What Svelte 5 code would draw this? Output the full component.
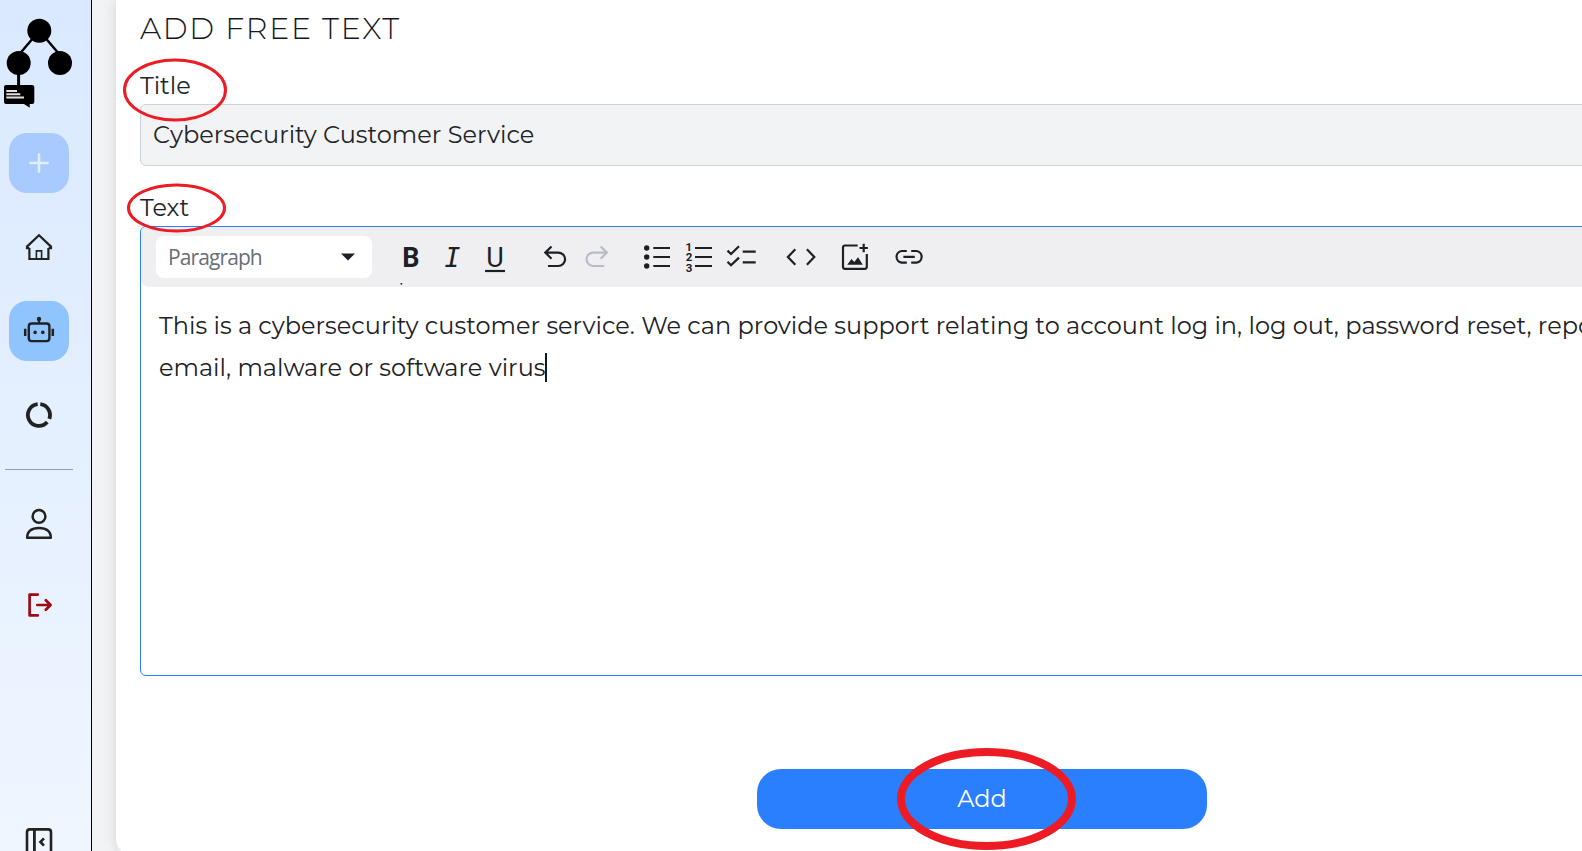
<script>
  let title = $state('Cybersecurity Customer Service');
</script>

<div class="app">
  <nav class="sidebar">
    <svg class="logo" width="78" height="133" viewBox="0 0 78 133">
      <path d="M39.3 30.7 L18.7 55 M39.3 30.7 L60 55" stroke="#000" stroke-width="2.5" />
      <path d="M18.6 63V88" stroke="#000" stroke-width="3" />
      <circle cx="39.3" cy="30.7" r="12" /><circle cx="18.7" cy="63" r="12" /><circle cx="60" cy="63" r="12" />
      <path d="M6 85H32.2Q34.3 85 34.3 87V102Q34.3 104 32.3 104H29.7V107.8L24 104H6Q4 104 4 102V87Q4 85 6 85Z" />
      <path d="M6.3 91H17M6.3 94.3H20.3M6.3 97.5H24" stroke="#e0e0e0" stroke-width="2" />
    </svg>
    <button class="item add" aria-label="New">
      <svg viewBox="0 0 60 60"><path d="M30 21.3V38.7M21.3 30H38.7" stroke="#e3efff" stroke-width="2.5" stroke-linecap="round" /></svg>
    </button>
    <button class="item" aria-label="Home">
      <svg viewBox="0 0 60 60" class="line">
        <path d="M20.4 31.2H18V29.6L30 18.3L42 29.6V31.2H39.6" />
        <path d="M20.4 31V42H39.4V31" />
        <path d="M27.4 42V33.9H32.6V42" stroke-width="1.6" />
      </svg>
    </button>
    <button class="item active" aria-label="Bots">
      <svg viewBox="0 0 60 60" class="line">
        <rect x="19.8" y="22.5" width="20.6" height="17.6" rx="2.8" stroke-width="2.4" />
        <path d="M30 22V18" /><circle cx="30" cy="18" r="1.1" fill="#222" />
        <circle cx="26.1" cy="31.4" r="1.8" class="dot" /><circle cx="33.8" cy="31.4" r="1.8" class="dot" />
        <path d="M16.2 27.7V35M43.8 27.7V35" stroke-width="2.5" />
      </svg>
    </button>
    <button class="item" aria-label="Usage">
      <svg viewBox="0 0 60 60" class="line">
        <path stroke-width="3.8" d="M31.3 19.2A10.9 10.9 0 0 1 40.3 33.8M38.2 37A10.9 10.9 0 1 1 28.7 19.2" />
      </svg>
    </button>
    <div class="divider"></div>
    <button class="item" aria-label="Profile">
      <svg viewBox="0 0 60 60" class="line">
        <circle cx="30" cy="22.4" r="6.4" stroke-width="2.5" />
        <path stroke-width="2.5" stroke-linejoin="round" d="M18.2 43.8C18 37.4 22.4 33.9 30 33.9S42 37.4 41.8 43.8Z" />
      </svg>
    </button>
    <button class="item logout" aria-label="Log out">
      <svg viewBox="0 0 60 60">
        <path d="M28.8 19.6H20.6V40.4H28.8M28.3 30H41.5M36.8 25.2L41.6 30L36.8 34.8" fill="none" stroke="#a00813" stroke-width="2.7" stroke-linecap="round" stroke-linejoin="round" />
      </svg>
    </button>
    <button class="item collapse" aria-label="Collapse">
      <svg viewBox="0 0 60 60" class="line">
        <rect x="18" y="17.4" width="24" height="26" rx="2.8" stroke-width="2.6" />
        <path d="M25.4 17V43" stroke-width="2.8" />
        <path d="M35 26.3L31.4 30L35 33.7" stroke-width="2.6" />
      </svg>
    </button>
  </nav>

  <main>
    <section class="card">
      <h1>ADD FREE TEXT</h1>
      <label class="caption" for="title"><span>Title</span>
        <svg class="ring" style:left="-18px" style:top="-19.5px" width="106" height="66"><ellipse cx="53" cy="33" rx="50.5" ry="30" stroke-width="3" /></svg>
      </label>
      <input id="title" bind:value={title} />
      <div class="caption second"><span>Text</span>
        <svg class="ring" style:left="-14px" style:top="-6px" width="102" height="52"><ellipse cx="50.5" cy="26" rx="48" ry="23" stroke-width="3" /></svg>
      </div>
      <div class="editor">
        <div class="toolbar">
          <div class="select"><span>Paragraph</span><svg width="14" height="8" viewBox="0 0 14 8"><path d="M0 .5H14L7 7.6Z" fill="#1c2026" /></svg></div>
          <div class="group">
            <svg viewBox="0 0 42 42"><text x="20.8" y="30.7" text-anchor="middle" font-family="Roboto" font-weight="700" font-size="27">B</text><rect class="dot" x="10.6" y="47" width="1.6" height="1.6" /></svg>
            <svg viewBox="0 0 42 42"><text x="20.6" y="30.5" text-anchor="middle" font-family="DejaVu Sans Mono" font-style="italic" font-size="26.5">I</text></svg>
            <svg viewBox="0 0 42 42"><text x="21" y="30.5" text-anchor="middle" font-family="Roboto" font-weight="400" font-size="27">U</text><path d="M11 35H31" /></svg>
          </div>
          <div class="group">
            <svg viewBox="0 0 42 42"><path d="M17.5 10.5L11.3 16.6L17.5 22.7M11.5 16.6H24.2A6.9 6.7 0 0 1 24.2 30H14" /></svg>
            <svg viewBox="0 0 42 42" class="off"><path d="M24.7 10.5L30.9 16.6L24.7 22.7M30.7 16.6H17.4A6.9 6.7 0 0 0 17.4 30H28.2" /></svg>
          </div>
          <div class="group">
            <svg viewBox="0 0 42 42"><g class="dot"><circle cx="10.7" cy="12" r="2.7" /><circle cx="10.7" cy="21" r="2.7" /><circle cx="10.7" cy="30" r="2.7" /></g><path d="M17.3 12H34M17.3 21H34M17.3 30H34" /></svg>
            <svg viewBox="0 0 42 42"><g font-family="Roboto" font-weight="700" font-size="11.5" text-anchor="middle"><text x="10.8" y="14.8">1</text><text x="11" y="25.2">2</text><text x="11" y="35.6">3</text></g><path d="M17 12H34M17 21H34M17 30H34" /></svg>
            <svg viewBox="0 0 42 42"><path d="M7.5 14.6L11 18L19 10.3M7.5 25.8L11 29.3L19 21.6M22.7 15.6H35.7M22.7 26.4H35.7" /></svg>
          </div>
          <div class="group">
            <svg viewBox="0 0 42 42"><path d="M15.3 13.3L7.9 21L15.3 28.7M26.9 13.3L34.3 21L26.9 28.7" /></svg>
          </div>
          <div class="group tight">
            <svg viewBox="0 0 42 42"><path d="M23.7 9.5H11Q9 9.5 9 11.5V30.8Q9 32.8 11 32.8H30.8Q32.8 32.8 32.8 30.8V18M29.7 7.8V16.2M25.5 12H33.9" /><path class="dot" d="M13.2 28.7L17.5 23L20.3 26L24 21.2L28.8 28.7Z" /></svg>
          </div>
          <div class="group tight">
            <svg viewBox="0 0 42 42"><path d="M18.8 15H13.6A5.8 5.9 0 0 0 13.6 26.7H18.8M23.2 15H28.6A5.8 5.9 0 0 1 28.6 26.7H23.2M15.4 20.9H26.8" /></svg>
          </div>
        </div>
        <div class="content">
          <div>This is a cybersecurity customer service. We can provide support relating to account log in, log out, password reset, report</div>
          <div class="last"><span>email, malware or software virus</span><i class="caret"></i></div>
        </div>
      </div>
      <button class="submit"><span>Add</span>
        <svg class="ring" style:left="139px" style:top="-23px" width="182" height="106"><ellipse cx="90.5" cy="53" rx="85.5" ry="47" stroke-width="8" /></svg>
      </button>
    </section>
  </main>
</div>

<style>
  :global(body) { margin: 0; overflow: hidden; }
  * { box-sizing: border-box; }
  .app {
    display: flex; width: 1582px; height: 851px; overflow: hidden; background: #f2f3f5;
    font-family: Montserrat, Inter, sans-serif; font-weight: 400; color: #222428;
  }
  button { border: 0; padding: 0; background: none; font: inherit; }
  .sidebar {
    flex: 0 0 92px; padding-left: 5px; border-right: 1px solid #000; overflow: hidden;
    background: linear-gradient(#dae9ff, #eff6ff);
    display: flex; flex-direction: column; align-items: flex-start;
  }
  .sidebar > * { flex-shrink: 0; }
  .logo { display: block; margin-left: -5px; }
  .item { width: 60px; height: 60px; margin: 0 4px 24px; border-radius: 18px; }
  .item svg { display: block; width: 60px; height: 60px; }
  .add { background: #a8caff; }
  .active { background: #90c4ff; }
  .line { fill: none; stroke: #222; stroke-width: 2.2; }
  .line .dot { fill: #222; stroke: none; }
  .divider { width: 68px; height: 1px; background: #929fae; margin-bottom: 24px; }
  .logout { margin-top: -3px; margin-bottom: 177px; }
  .collapse { margin-bottom: 0; }

  main { flex: 1; padding-left: 24px; min-width: 0; }
  .card {
    height: 855px; width: 1700px; padding: 0 24px; background: #fff;
    border-radius: 0 0 16px 16px; box-shadow: 0 0 14px rgba(0, 0, 0, .13);
    display: flex; flex-direction: column;
  }
  .card > * { flex-shrink: 0; }
  h1 { margin: 0; height: 76px; padding-top: 11px; font-size: 30px; line-height: 36px; font-weight: 350; letter-spacing: 1.7px; color: #17181b; }
  .caption { position: relative; display: block; height: 28px; font-size: 24px; line-height: 19px; }
  .second { margin-top: 22px; height: 38px; padding-top: 10px; }
  .ring { position: absolute; z-index: 3; pointer-events: none; fill: none; stroke: #ed1c24; overflow: visible; }
  input {
    height: 62px; width: 1652px; border: 1px solid #ced3d9; border-radius: 6px; background: #f2f3f5;
    padding: 0 12px 2px; font: inherit; font-size: 24px; color: #222428; outline: 0;
  }
  .editor { height: 450px; width: 1652px; border: 1px solid #2b7fff; border-radius: 6px; background: #fff; }
  .toolbar {
    height: 60px; padding-left: 15px; background: #efeff1; border-radius: 5px 5px 8px 8px;
    display: flex; align-items: center;
  }
  .select {
    width: 216px; height: 42px; margin-right: 17.5px; padding: 0 17px 0 12px; background: #fff; border-radius: 8px;
    display: flex; align-items: center; justify-content: space-between;
    font-family: "Segoe UI", "Open Sans", sans-serif; font-size: 21px; letter-spacing: -.9px; color: #6b6e76;
  }
  .group { display: flex; margin-right: 18px; }
  .group:has(+ .tight), .tight { margin-right: 12px; }
  .group svg { display: block; width: 42px; height: 42px; overflow: visible; fill: none; stroke: #1c2026; stroke-width: 2.2; }
  .group .dot { fill: #1c2026; stroke: none; }
  .group text { fill: #1c2026; stroke-width: 0; }
  .group svg.off { stroke: #b9bbc8; }
  .content { padding: 18px 0 0 18px; font-size: 24px; line-height: 42px; white-space: nowrap; color: #1d2125; }
  .last { display: flex; align-items: center; }
  .caret { width: 2px; height: 29px; margin: -2px 0 0 -1px; background: #101820; }
  .submit {
    position: relative; width: 450px; height: 60px; margin: 93px 0 0 617px; padding-bottom: 2px; border-radius: 24px;
    background: #2a7fff; color: #fff; font-size: 24px;
  }
</style>
